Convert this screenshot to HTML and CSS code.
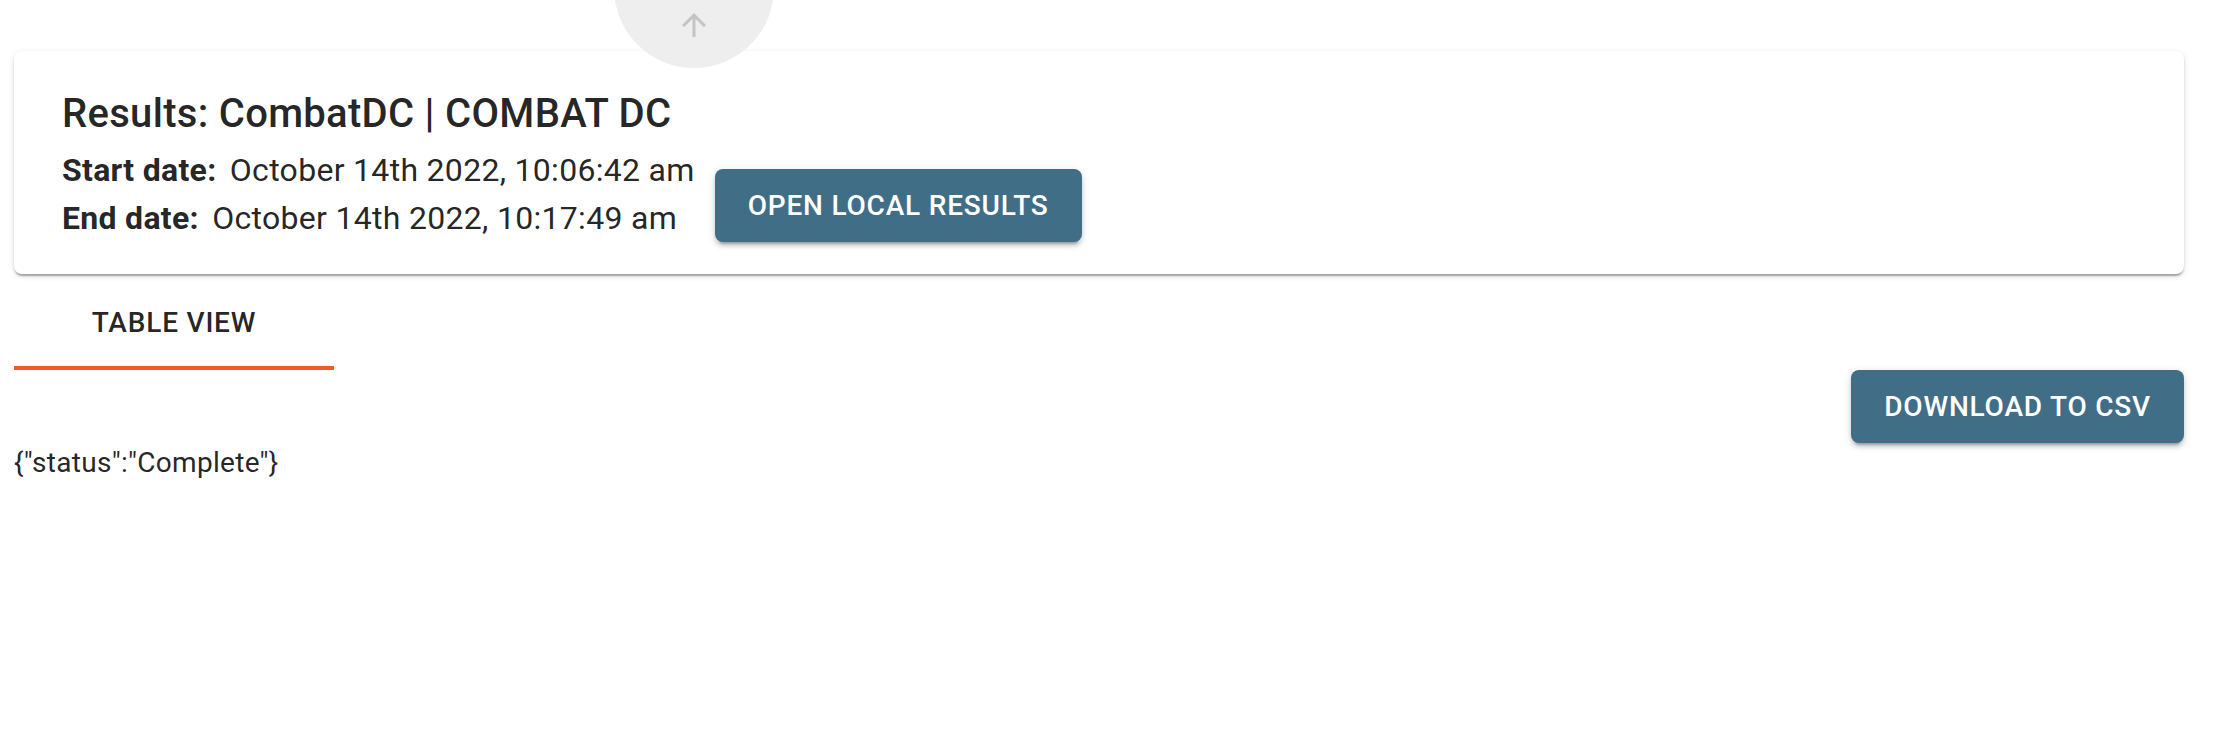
FILE: index.html
```html
<!DOCTYPE html>
<html lang="en">
<head>
<meta charset="utf-8">
<title>Results</title>
<link rel="stylesheet" href="styles.css">
</head>
<body>
<div class="fab">
  <svg class="fab-icon" viewBox="0 0 24 24" aria-hidden="true"><path d="M4 12l1.41 1.41L11 7.83V20h2V7.83l5.58 5.59L20 12l-8-8-8 8z"/></svg>
</div>
<main class="page">
  <section class="card">
    <h2 class="title">Results: CombatDC | COMBAT DC</h2>
    <div class="meta">
      <div class="dates">
        <div class="line"><b class="label">Start date:</b> <span>October 14th 2022, 10:06:42 am</span></div>
        <div class="line"><b class="label">End date:</b> <span>October 14th 2022, 10:17:49 am</span></div>
      </div>
      <button class="btn">OPEN LOCAL RESULTS</button>
    </div>
  </section>
  <div class="tabs">
    <div class="tab">TABLE VIEW</div>
  </div>
  <div class="actions">
    <button class="btn">DOWNLOAD TO CSV</button>
  </div>
  <p class="status">{"status":"Complete"}</p>
</main>
</body>
</html>
```

FILE: styles.css
```css
html, body {
  margin: 0;
  background: #ffffff;
}
body {
  font-family: Roboto, "Liberation Sans", Arial, sans-serif;
  color: rgba(0, 0, 0, 0.87);
  position: relative;
  overflow: hidden;
  height: 756px;
}
.fab {
  position: absolute;
  left: 614px;
  top: -92px;
  width: 160px;
  height: 160px;
  border-radius: 50%;
  background: #eeeeee;
  display: flex;
  justify-content: center;
  align-items: flex-end;
  padding-bottom: 25px;
  box-sizing: border-box;
  z-index: 2;
}
.fab-icon {
  width: 36px;
  height: 36px;
  fill: #c4c4c4;
}
.page {
  padding: 51px 30px 0 14px;
}
.card {
  background: #fff;
  border-radius: 8px;
  box-shadow: 0 4px 2px -2px rgba(0,0,0,0.2), 0 2px 2px 0 rgba(0,0,0,0.14), 0 2px 6px 0 rgba(0,0,0,0.12);
  padding: 31px 48px 32px 48px;
}
.title {
  margin: 0;
  font-size: 40px;
  line-height: 64px;
  font-weight: 500;
  letter-spacing: 0.0075em;
}
.meta {
  display: flex;
  align-items: flex-end;
  gap: 20px;
}
.line {
  font-size: 32px;
  line-height: 48px;
  letter-spacing: 0.00938em;
  white-space: nowrap;
}
.label {
  font-weight: 700;
  margin-right: 5px;
}
.btn {
  font-family: Roboto, "Liberation Sans", Arial, sans-serif;
  font-size: 28px;
  font-weight: 500;
  letter-spacing: 0.02857em;
  color: #fff;
  background: #416e87;
  border: none;
  border-radius: 8px;
  height: 73px;
  padding: 0 33px;
  box-shadow: 0 6px 2px -4px rgba(0,0,0,0.2), 0 4px 4px 0 rgba(0,0,0,0.14), 0 2px 10px 0 rgba(0,0,0,0.12);
}
.tabs {
  display: flex;
}
.tab {
  width: 320px;
  height: 96px;
  box-sizing: border-box;
  padding-top: 4px;
  border-bottom: 4px solid #f15a2b;
  display: flex;
  align-items: center;
  justify-content: center;
  font-size: 28px;
  font-weight: 500;
  letter-spacing: 0.02857em;
  color: rgba(0, 0, 0, 0.87);
}
.actions {
  display: flex;
  justify-content: flex-end;
}
.status {
  margin: 0;
  font-size: 28px;
  line-height: 40px;
  letter-spacing: 0.01071em;
}
```
